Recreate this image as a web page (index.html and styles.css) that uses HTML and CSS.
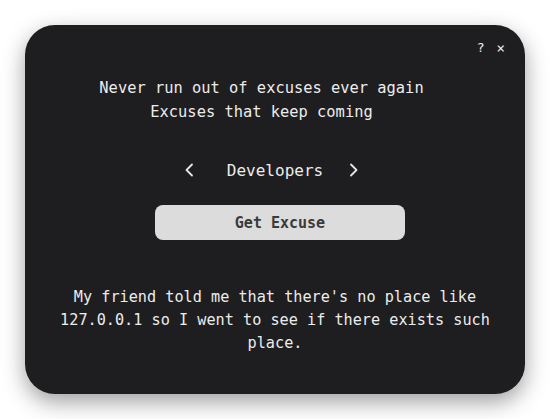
FILE: index.html
```html
<!DOCTYPE html>
<html>
<head>
<meta charset="utf-8">
<link rel="stylesheet" href="styles.css">
</head>
<body>
<div class="card">
  <div class="topbar">
    <span class="tb-btn">?</span>
    <span class="tb-btn close">×</span>
  </div>
  <div class="title">
    <div>Never run out of excuses ever again</div>
    <div>Excuses that keep coming</div>
  </div>
  <div class="nav">
    <svg class="chev prev" width="10" height="14" viewBox="0 0 10 14"><path d="M8 1.5 L2.5 7 L8 12.5" fill="none" stroke="#e6e6e6" stroke-width="1.8" stroke-linecap="round" stroke-linejoin="round"/></svg>
    <span class="cat">Developers</span>
    <svg class="chev next" width="10" height="14" viewBox="0 0 10 14"><path d="M2 1.5 L7.5 7 L2 12.5" fill="none" stroke="#e6e6e6" stroke-width="1.8" stroke-linecap="round" stroke-linejoin="round"/></svg>
  </div>
  <div class="btn-wrap"><button class="get">Get Excuse</button></div>
  <p class="excuse">My friend told me that there's no place like 127.0.0.1 so I went to see if there exists such place.</p>
</div>
</body>
</html>
```
FILE: styles.css
```css
html, body {
  margin: 0;
  padding: 0;
  background: #ffffff;
}
body {
  padding: 25px;
  font-family: "DejaVu Sans Mono", "Liberation Mono", monospace;
  color: #ececec;
}
.card {
  width: 500px;
  height: 369px;
  box-sizing: border-box;
  background: #1e1e20;
  border-radius: 30px;
  box-shadow: 0 8px 22px rgba(0, 0, 0, 0.38);
  padding: 15px 22px 0 22px;
}
.topbar {
  display: flex;
  justify-content: flex-end;
  gap: 12px;
  height: 16px;
  line-height: 16px;
  font-size: 13px;
  margin-right: -2px;
}
.tb-btn {
  color: #f0f0f0;
}
.close {
  font-size: 14px;
}
.title {
  margin-top: 20px;
  padding-right: 27px;
  text-align: center;
  font-size: 15.4px;
  line-height: 24px;
}
.nav {
  margin-top: 34px;
  display: flex;
  justify-content: center;
  align-items: center;
  height: 24px;
  font-size: 16px;
  padding-right: 7px;
}
.prev {
  margin-right: 33px;
}
.next {
  margin-left: 26px;
}
.btn-wrap {
  margin-top: 23px;
  display: flex;
  justify-content: center;
  padding-left: 10px;
}
.get {
  width: 250px;
  height: 35px;
  border: none;
  border-radius: 8px;
  background: #dcdcdc;
  color: #3a3a3a;
  font-family: "DejaVu Sans Mono", "Liberation Mono", monospace;
  font-weight: bold;
  font-size: 15px;
  padding: 0;
}
.excuse {
  margin: 46px 8px 0 8px;
  text-align: center;
  font-size: 15.2px;
  line-height: 23px;
}
```
